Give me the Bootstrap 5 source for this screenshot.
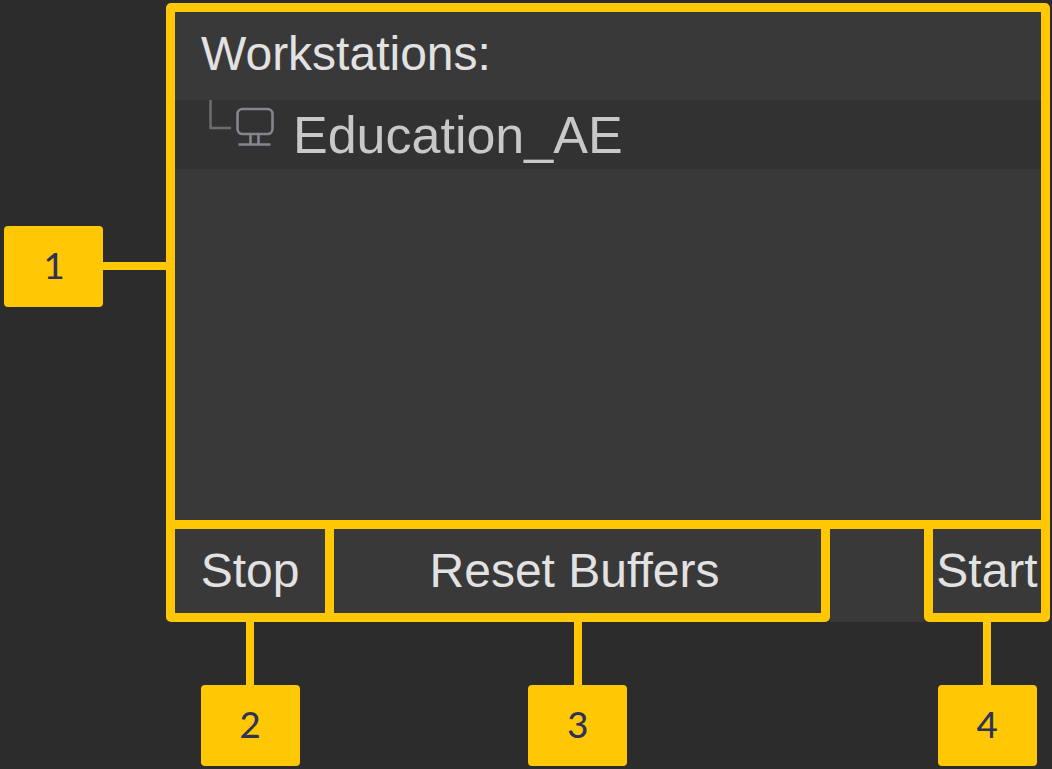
<!DOCTYPE html>
<html lang="en">
<head>
<meta charset="utf-8">
<meta name="viewport" content="width=device-width, initial-scale=1">
<title>Workstations</title>
<link href="https://cdn.jsdelivr.net/npm/bootstrap@5.3.0/dist/css/bootstrap.min.css" rel="stylesheet">
<style>
  :root { --mark: #ffc704; --surface: #393939; --line: 9px; }
  body { background: #2c2c2c; font-family: "Liberation Sans", Arial, sans-serif; }
  .figure-area { padding: 3px 2px 3px 4px; }
  .lead-column { width: 162px; }
  .tag {
    width: 99px; height: 81px; border-radius: 4px; padding-bottom: 3px;
    background: var(--mark); color: #2f3258;
    font: 42px/1 Carlito, Lato, sans-serif;
  }
  .wire-h { height: 8px; background: var(--mark); }
  .wire-v { width: 8px; height: 63px; background: var(--mark); }
  .panel {
    min-height: 526px; background: var(--surface);
    border: var(--line) solid var(--mark); border-radius: 5px 5px 0 0;
  }
  .panel-title { height: 88px; padding: 0 26px 4px; font-size: 48px; line-height: 56px; color: #e2e2e2; }
  .tree-row { height: 69px; background: #323232; color: #c8c8c8; font-size: 52px; line-height: 60px; padding-left: 33px; }
  .tree-row svg { width: 68px; height: 69px; }
  .tree-label { margin-left: 17px; }
  .actions { margin-top: -9px; }
  .action {
    width: 100%; height: 102px; padding: 0; background: var(--surface); color: #e2e2e2;
    border: var(--line) solid var(--mark); border-radius: 0 0 5px 5px;
    font-size: 48px; line-height: 56px;
  }
  .action:hover, .action:focus-visible { background: #444; color: #fff; border-color: var(--mark); }
  .stop-slot { width: 168px; }
  .reset-slot { margin-left: -9px; }
  .reset-slot .action { padding-right: 6px; }
  .spacer { width: 94px; height: 102px; background: var(--surface); border-top: var(--line) solid var(--mark); }
  .start-slot { width: 126px; }
</style>
</head>
<body>
<main class="figure-area">
  <div class="d-flex align-items-center">
    <div class="lead-column d-flex align-items-center flex-shrink-0">
      <div class="tag d-flex align-items-center justify-content-center">1</div>
      <div class="wire-h flex-grow-1"></div>
    </div>
    <section class="panel flex-grow-1" aria-labelledby="title">
      <h1 id="title" class="panel-title d-flex align-items-center m-0 fw-normal">Workstations:</h1>
      <ul class="list-unstyled m-0">
        <li class="tree-row d-flex align-items-center">
          <svg viewBox="0 0 68 69" fill="none" aria-hidden="true">
            <path d="M2.5 0V28H23" stroke="#6e6e6e" stroke-width="2.4"/>
            <g stroke="#85858f" stroke-width="2.6">
              <rect x="29.5" y="9" width="35" height="25" rx="5"/>
              <path d="M42.500 34V44M50.500 34V44M30.500 44.500H62.500"/>
            </g>
          </svg>
          <span class="tree-label">Education_AE</span>
        </li>
      </ul>
    </section>
  </div>
  <div class="actions d-flex">
    <div class="lead-column flex-shrink-0"></div>
    <div class="stop-slot d-flex flex-column align-items-center flex-shrink-0">
      <button type="button" class="btn action">Stop</button>
      <div class="wire-v"></div>
      <div class="tag d-flex align-items-center justify-content-center">2</div>
    </div>
    <div class="reset-slot d-flex flex-column align-items-center flex-grow-1">
      <button type="button" class="btn action">Reset Buffers</button>
      <div class="wire-v"></div>
      <div class="tag d-flex align-items-center justify-content-center">3</div>
    </div>
    <div class="spacer flex-shrink-0"></div>
    <div class="start-slot d-flex flex-column align-items-center flex-shrink-0">
      <button type="button" class="btn action">Start</button>
      <div class="wire-v"></div>
      <div class="tag d-flex align-items-center justify-content-center">4</div>
    </div>
  </div>
</main>
<script src="https://cdn.jsdelivr.net/npm/bootstrap@5.3.0/dist/js/bootstrap.bundle.min.js"></script>
</body>
</html>
